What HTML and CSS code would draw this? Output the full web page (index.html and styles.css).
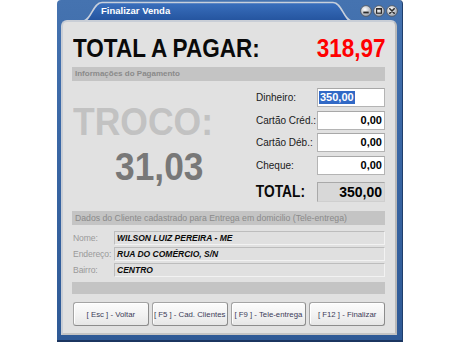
FILE: index.html
```html
<!DOCTYPE html>
<html lang="pt-BR">
<head>
<meta charset="utf-8">
<title>Finalizar Venda</title>
<link rel="stylesheet" href="styles.css">
</head>
<body>
<div class="window">
  <div class="titlebar">
    <div class="tab"><span class="title">Finalizar Venda</span></div>
    <div class="ctrls">
      <svg class="cbtn" width="12" height="12" viewBox="0 0 12 12"><defs><radialGradient id="cg1" cx="0.4" cy="0.35" r="0.7"><stop offset="0" stop-color="#ffffff"/><stop offset="1" stop-color="#9399a3"/></radialGradient></defs><circle cx="6" cy="6" r="5.4" fill="url(#cg1)" stroke="#4a505a" stroke-width="0.8"/><rect x="3.3" y="6.6" width="5.4" height="1.8" fill="#2b2b2b"/></svg>
      <svg class="cbtn" width="12" height="12" viewBox="0 0 12 12"><defs><radialGradient id="cg2" cx="0.4" cy="0.35" r="0.7"><stop offset="0" stop-color="#ffffff"/><stop offset="1" stop-color="#9399a3"/></radialGradient></defs><circle cx="6" cy="6" r="5.4" fill="url(#cg2)" stroke="#4a505a" stroke-width="0.8"/><rect x="3.6" y="3.6" width="4.8" height="4.6" fill="none" stroke="#2b2b2b" stroke-width="1.2"/><rect x="3.6" y="3.4" width="4.8" height="1.2" fill="#2b2b2b"/></svg>
      <svg class="cbtn" width="12" height="12" viewBox="0 0 12 12"><defs><radialGradient id="cg3" cx="0.4" cy="0.35" r="0.7"><stop offset="0" stop-color="#ffffff"/><stop offset="1" stop-color="#9399a3"/></radialGradient></defs><circle cx="6" cy="6" r="5.4" fill="url(#cg3)" stroke="#4a505a" stroke-width="0.8"/><path d="M3.8 3.8 L8.2 8.2 M8.2 3.8 L3.8 8.2" stroke="#2b2b2b" stroke-width="1.6" stroke-linecap="round"/></svg>
    </div>
  </div>
  <div class="content">
    <div class="total-row">
      <span class="big-label">TOTAL A PAGAR:</span>
      <span class="big-value">318,97</span>
    </div>
    <div class="section">Informações do Pagamento</div>
    <div class="payment">
      <div class="troco">
        <div class="troco-label">TROCO:</div>
        <div class="troco-value">31,03</div>
      </div>
      <div class="fields">
        <div class="frow"><span class="flabel">Dinheiro:</span><span class="input left"><span class="sel">350,00</span></span></div>
        <div class="frow"><span class="flabel">Cartão Créd.:</span><span class="input">0,00</span></div>
        <div class="frow"><span class="flabel">Cartão Déb.:</span><span class="input">0,00</span></div>
        <div class="frow"><span class="flabel">Cheque:</span><span class="input">0,00</span></div>
        <div class="frow total"><span class="flabel tlabel">TOTAL:</span><span class="input ro">350,00</span></div>
      </div>
    </div>
    <div class="section sec2">Dados do Cliente cadastrado para Entrega em domicilio (Tele-entrega)</div>
    <div class="client">
      <div class="crow"><span class="clabel">Nome:</span><span class="cfield">WILSON LUIZ PEREIRA - ME</span></div>
      <div class="crow"><span class="clabel">Endereço:</span><span class="cfield">RUA DO COMÉRCIO, S/N</span></div>
      <div class="crow"><span class="clabel">Bairro:</span><span class="cfield">CENTRO</span></div>
    </div>
    <div class="status"></div>
    <div class="buttons">
      <button class="btn">[ Esc ] - Voltar</button>
      <button class="btn">[ F5 ] - Cad. Clientes</button>
      <button class="btn">[ F9 ] - Tele-entrega</button>
      <button class="btn">[ F12 ] - Finalizar</button>
    </div>
  </div>
</div>
</body>
</html>
```
FILE: styles.css
```css
* { box-sizing: border-box; }
html, body { margin: 0; padding: 0; background: #ffffff; }
body {
  width: 460px;
  height: 345px;
  overflow: hidden;
  font-family: "Liberation Sans", Arial, sans-serif;
}

.window {
  margin-left: 57px;
  width: 346px;
  height: 342px;
  background: linear-gradient(to bottom, #4573b0 0%, #3a67a5 40%, #2f5a96 100%);
  border-radius: 4px 4px 0 0;
  border-bottom: 2px solid #1b3560;
  border-right: 1px solid #1f3e6c;
  display: flex;
  flex-direction: column;
}

.titlebar {
  height: 20px;
  display: flex;
  padding-left: 26px;
}

.tab {
  width: 269px;
  height: 20px;
  background: url("data:image/svg+xml,%3Csvg xmlns='http://www.w3.org/2000/svg' width='269' height='20'%3E%3Cdefs%3E%3ClinearGradient id='g' x1='0' y1='0' x2='0' y2='1'%3E%3Cstop offset='0' stop-color='rgb(58,112,190)'/%3E%3Cstop offset='1' stop-color='rgb(36,84,158)'/%3E%3C/linearGradient%3E%3C/defs%3E%3Cpath d='M0 21 C8 21 10 2.5 19 2.5 L250 2.5 C259 2.5 261 21 269 21' fill='url(%23g)' stroke='rgb(200,208,220)' stroke-width='1.6'/%3E%3C/svg%3E") no-repeat;
}

.title {
  display: block;
  padding: 2px 0 0 18px;
  line-height: 18px;
  font-size: 9.5px;
  font-weight: bold;
  color: #ffffff;
}

.ctrls {
  display: flex;
  gap: 1px;
  margin-left: 8px;
  padding-top: 5px;
}
.cbtn { display: block; }

.content {
  margin-left: 4px;
  width: 336px;
  height: 315px;
  background: #e1e1e1;
  border: 2px solid #c9ced6;
  border-right-color: #b9b9b9;
  border-bottom-color: #c4c4c4;
  border-radius: 6px 6px 0 0;
  padding: 11px 10px 0 9px;
  display: flex;
  flex-direction: column;
}

.total-row {
  height: 30px;
  line-height: 30px;
  display: flex;
  justify-content: space-between;
  font-size: 25px;
  font-weight: bold;
}
.big-label {
  color: #0a0a0a;
  display: inline-block;
  transform: scaleX(0.9);
  transform-origin: left center;
  margin-left: 1px;
}
.big-value {
  color: #ff0000;
  display: inline-block;
  transform: scaleX(0.9);
  transform-origin: right center;
}

.section {
  margin-top: 4px;
  height: 14px;
  line-height: 14px;
  background: #c4c4c4;
  color: #8a8a8a;
  font-size: 8px;
  font-weight: bold;
  padding-left: 3px;
  white-space: nowrap;
}
.section.sec2 {
  margin-top: 9px;
  font-weight: normal;
  font-size: 8.7px;
}

.payment {
  height: 121px;
  display: flex;
}

.troco {
  flex: 1;
  padding-top: 21px;
}
.troco-label {
  font-size: 39px;
  line-height: 39px;
  font-weight: bold;
  color: #c2c2c2;
  transform: scaleX(0.91);
  transform-origin: left center;
  margin-left: 1px;
}
.troco-value {
  margin-top: 7px;
  font-size: 38px;
  line-height: 38px;
  font-weight: bold;
  color: #787878;
  padding-left: 43px;
  transform: scaleX(0.93);
  transform-origin: 43px center;
}

.fields {
  width: 130px;
  padding-top: 7px;
}
.frow {
  height: 19px;
  display: flex;
  align-items: center;
  margin-bottom: 3.67px;
}
.flabel {
  flex: 1;
  font-size: 10px;
  color: #1a1a1a;
  white-space: nowrap;
  padding-left: 1px;
}
.input {
  width: 68px;
  height: 19px;
  background: #ffffff;
  border: 1px solid #b4b4b4;
  border-top-color: #a8a8a8;
  font-size: 11px;
  font-weight: bold;
  color: #000000;
  text-align: right;
  line-height: 17px;
  padding-right: 2px;
}
.input.left {
  text-align: left;
  padding-left: 1px;
}
.sel {
  background: #3169c6;
  color: #ffffff;
  display: inline-block;
  line-height: 13px;
  padding: 0 1px;
}
.frow.total {
  margin-top: 7px;
  height: 20px;
}
.tlabel {
  font-size: 16px;
  font-weight: bold;
  color: #0a0a0a;
  transform: scaleX(0.86);
  transform-origin: left center;
}
.input.ro {
  height: 20px;
  background: #d8d8d8;
  border: 1px solid #a9a9a9;
  border-bottom-color: #cfcfcf;
  border-right-color: #cfcfcf;
  font-size: 14px;
  line-height: 18px;
}

.client {
  margin-top: 6px;
  display: flex;
  flex-direction: column;
  gap: 2px;
}
.crow {
  height: 14px;
  display: flex;
}
.clabel {
  width: 42px;
  font-size: 8.6px;
  color: #9a9a9a;
  line-height: 14px;
  padding-left: 1px;
  white-space: nowrap;
  letter-spacing: -0.1px;
}
.cfield {
  flex: 1;
  background: #e0e0e0;
  border: 1px solid #bdbdbd;
  border-bottom-color: #f2f2f2;
  border-right-color: #f2f2f2;
  font-size: 8.5px;
  font-weight: bold;
  font-style: italic;
  color: #0a0a0a;
  line-height: 12px;
  padding-left: 2px;
}

.status {
  margin-top: 5px;
  height: 12px;
  background: #c4c4c4;
}

.buttons {
  margin-top: 8px;
  display: grid;
  grid-template-columns: repeat(4, 1fr);
  gap: 3px;
  padding-left: 1px;
}
.btn {
  height: 24px;
  margin: 0;
  padding: 0;
  background: linear-gradient(to bottom, #fcfcfc 0%, #f1f1f1 60%, #e6e6e6 100%);
  border: 1px solid #a4a4a4;
  border-bottom-color: #8c8c8c;
  border-right-color: #8c8c8c;
  border-radius: 3px;
  font-family: "Liberation Sans", Arial, sans-serif;
  font-size: 7.8px;
  color: #3c3c58;
  white-space: nowrap;
  box-shadow: inset 1px 1px 0 #ffffff;
}
```
